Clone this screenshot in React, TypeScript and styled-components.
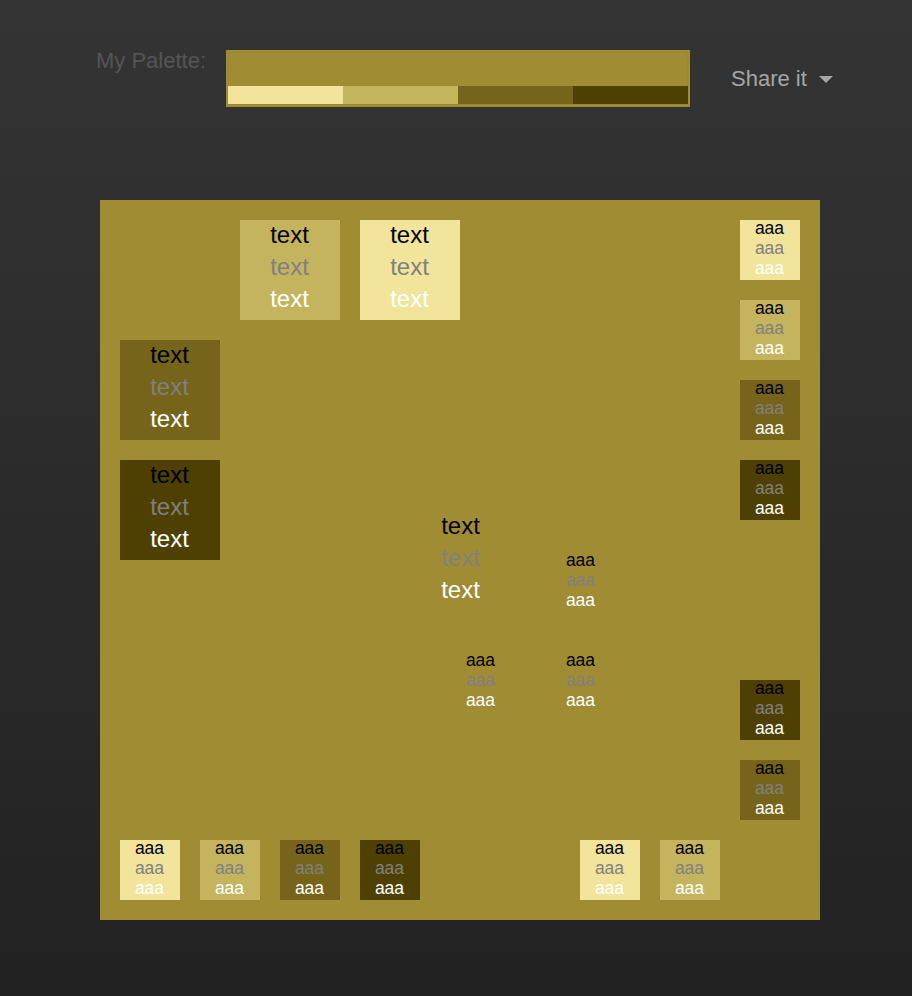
import React from "react";
import styled, { createGlobalStyle } from "styled-components";

const GlobalStyle = createGlobalStyle`
  html, body { margin: 0; padding: 0; }
  body {
    font-family: "Liberation Sans", Arial, Helvetica, sans-serif;
    background: #222;
  }
`;

const C = {
  base: "#a08c33",
  light: "#f2e49b",
  lightMid: "#c5b45e",
  dark: "#76641a",
  darkest: "#4e3f02",
};

const Page = styled.div`
  width: 912px;
  height: 996px;
  background: linear-gradient(to bottom, #343434 0%, #222222 100%);
  overflow: hidden;
`;

const Header = styled.header`
  display: flex;
  align-items: center;
  padding: 50px 0 0 96px;
  height: 57px;
`;

const Label = styled.div`
  align-self: flex-start;
  margin-top: -2px;
  font-size: 22px;
  line-height: 26px;
  color: #555;
  width: 130px;
`;

const PaletteBar = styled.div`
  width: 460px;
  height: 53px;
  border: 2px solid ${C.base};
  box-shadow: inset 0 0 0 1px #9a8731;
  background: ${C.base};
  display: flex;
  flex-direction: column;
`;

const PaletteMain = styled.div`
  flex: 1;
`;

const SwatchRow = styled.div`
  display: flex;
  height: 18px;
  margin-bottom: 1px;
`;

const Swatch = styled.div<{ $c: string }>`
  flex: 1;
  background: ${(p) => p.$c};
`;

const Share = styled.div`
  margin-left: 41px;
  display: flex;
  align-items: center;
  gap: 12px;
  font-size: 22px;
  color: #a6a6a6;
`;

const Caret = styled.span`
  width: 0;
  height: 0;
  border-left: 7px solid transparent;
  border-right: 7px solid transparent;
  border-top: 7px solid #a6a6a6;
  margin-top: 2px;
`;

const Canvas = styled.div`
  margin: 93px 0 0 100px;
  width: 720px;
  height: 720px;
  background: ${C.base};
  display: grid;
  grid-template-columns: repeat(720, 1px);
  grid-template-rows: repeat(720, 1px);
`;

const Box = styled.div<{ $x: number; $y: number; $big?: boolean; $bg?: string }>`
  grid-column: ${(p) => p.$x + 1} / span ${(p) => (p.$big ? 100 : 60)};
  grid-row: ${(p) => p.$y + 1} / span ${(p) => (p.$big ? 100 : 60)};
  background: ${(p) => p.$bg || "transparent"};
  display: flex;
  flex-direction: column;
  align-items: center;
  font-size: ${(p) => (p.$big ? "24px" : "17.5px")};
  line-height: ${(p) => (p.$big ? "32px" : "20px")};
`;

const Lines = styled.div<{ $big?: boolean }>`
  display: flex;
  flex-direction: column;
  align-items: center;
  margin-top: ${(p) => (p.$big ? "-1px" : "-2px")};
  margin-left: -1px;
`;

const Line = styled.span<{ $c: string }>`
  color: ${(p) => p.$c};
`;

type Item = { x: number; y: number; big?: boolean; bg?: string };

const items: Item[] = [
  { x: 140, y: 20, big: true, bg: C.lightMid },
  { x: 260, y: 20, big: true, bg: C.light },
  { x: 20, y: 140, big: true, bg: C.dark },
  { x: 20, y: 260, big: true, bg: C.darkest },
  { x: 640, y: 20, bg: C.light },
  { x: 640, y: 100, bg: C.lightMid },
  { x: 640, y: 180, bg: C.dark },
  { x: 640, y: 260, bg: C.darkest },
  { x: 640, y: 480, bg: C.darkest },
  { x: 640, y: 560, bg: C.dark },
  { x: 20, y: 640, bg: C.light },
  { x: 100, y: 640, bg: C.lightMid },
  { x: 180, y: 640, bg: C.dark },
  { x: 260, y: 640, bg: C.darkest },
  { x: 480, y: 640, bg: C.light },
  { x: 560, y: 640, bg: C.lightMid },
  { x: 311, y: 311, big: true },
  { x: 451, y: 352 },
  { x: 351, y: 452 },
  { x: 451, y: 452 },
];

export default function App() {
  return (
    <Page>
      <GlobalStyle />
      <Header>
        <Label>My Palette:</Label>
        <PaletteBar>
          <PaletteMain />
          <SwatchRow>
            <Swatch $c={C.light} />
            <Swatch $c={C.lightMid} />
            <Swatch $c={C.dark} />
            <Swatch $c={C.darkest} />
          </SwatchRow>
        </PaletteBar>
        <Share>
          Share it
          <Caret />
        </Share>
      </Header>
      <Canvas>
        {items.map((it, i) => {
          const w = it.big ? "text" : "aaa";
          return (
            <Box key={i} $x={it.x} $y={it.y} $big={it.big} $bg={it.bg}>
              <Lines $big={it.big}>
                <Line $c="#000">{w}</Line>
                <Line $c="#808080">{w}</Line>
                <Line $c="#fff">{w}</Line>
              </Lines>
            </Box>
          );
        })}
      </Canvas>
    </Page>
  );
}
